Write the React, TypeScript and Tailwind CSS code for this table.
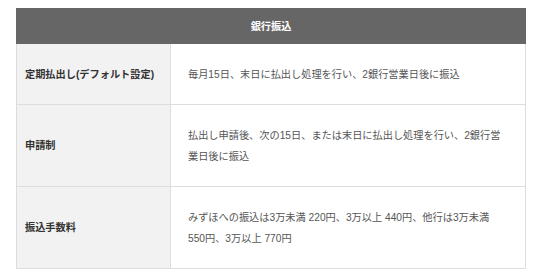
const rows = [
  {
    label: '定期払出し(デフォルト設定)',
    text: '毎月15日、末日に払出し処理を行い、2銀行営業日後に振込',
  },
  {
    label: '申請制',
    text: '払出し申請後、次の15日、または末日に払出し処理を行い、2銀行営業日後に振込',
  },
  {
    label: '振込手数料',
    text: 'みずほへの振込は3万未満 220円、3万以上 440円、他行は3万未満 550円、3万以上 770円',
  },
];

export default function App() {
  return (
    <div className="w-[540px] h-[277px] bg-white pt-2 pl-4 font-['Liberation_Sans','Noto_Sans_CJK_JP',sans-serif] [font-feature-settings:'pkna'] text-[10.2px]">
      <table className="w-[510px] border-collapse table-fixed">
        <colgroup>
          <col className="w-[154px]" />
          <col />
        </colgroup>
        <thead>
          <tr>
            <th
              colSpan={2}
              className="h-[35px] bg-[#666666] border border-[#666666] text-white font-bold text-center leading-[21px]"
            >
              銀行振込
            </th>
          </tr>
        </thead>
        <tbody>
          {rows.map((row) => (
            <tr key={row.label}>
              <td className="bg-[#f2f2f2] border border-[#dddddd] px-2 py-[19.5px] font-bold text-[#333333] leading-[21px] align-middle">
                {row.label}
              </td>
              <td className="border border-[#dddddd] pl-[17px] pr-5 py-[19.5px] text-[#555555] leading-[21px] align-middle">
                {row.text}
              </td>
            </tr>
          ))}
        </tbody>
      </table>
    </div>
  );
}
